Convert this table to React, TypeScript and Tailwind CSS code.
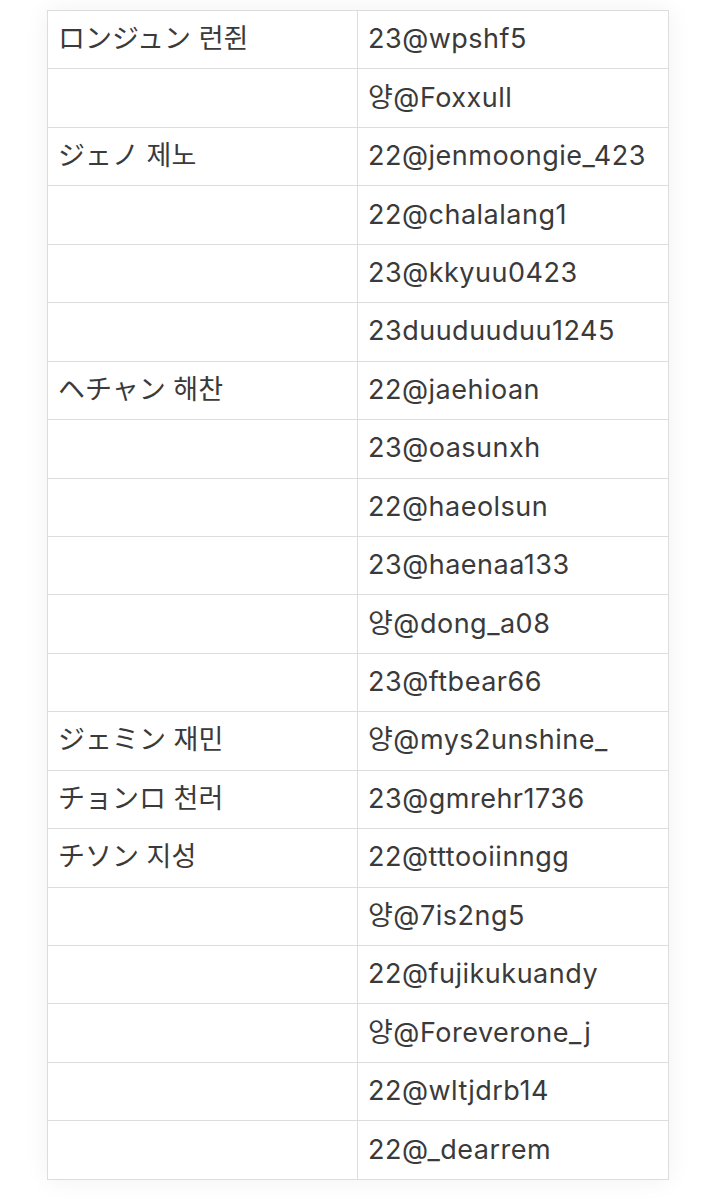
const rows: [string, string][] = [
  ['ロンジュン 런쥔', '23@wpshf5'],
  ['', '양@Foxxull'],
  ['ジェノ 제노', '22@jenmoongie_423'],
  ['', '22@chalalang1'],
  ['', '23@kkyuu0423'],
  ['', '23duuduuduu1245'],
  ['ヘチャン 해찬', '22@jaehioan'],
  ['', '23@oasunxh'],
  ['', '22@haeolsun'],
  ['', '23@haenaa133'],
  ['', '양@dong_a08'],
  ['', '23@ftbear66'],
  ['ジェミン 재민', '양@mys2unshine_'],
  ['チョンロ 천러', '23@gmrehr1736'],
  ['チソン 지성', '22@tttooiinngg'],
  ['', '양@7is2ng5'],
  ['', '22@fujikukuandy'],
  ['', '양@Foreverone_j'],
  ['', '22@wltjdrb14'],
  ['', '22@_dearrem'],
];

function App() {
  return (
    <main
      className="min-h-[1199px] w-[716px] bg-white pt-[10px] pl-[47px]"
      style={{ fontFamily: 'Inter, "Noto Sans CJK JP", "Noto Sans CJK KR", sans-serif' }}
    >
      <table className="w-[622px] table-fixed border-collapse bg-white text-[27px] text-[#3a3a3a] shadow-[0_0_24px_rgba(0,0,0,0.06)]">
        <tbody>
          {rows.map(([name, handle], i) => (
            <tr key={i} className="h-[58.45px]">
              <td className="w-[310px] border border-[#dddddd] pl-[10px] pb-[2px] align-middle leading-none">{name}</td>
              <td className="border border-[#dddddd] pl-[10px] pb-[2px] align-middle leading-none tracking-[0.5px]">{handle}</td>
            </tr>
          ))}
        </tbody>
      </table>
    </main>
  );
}

export default App;
